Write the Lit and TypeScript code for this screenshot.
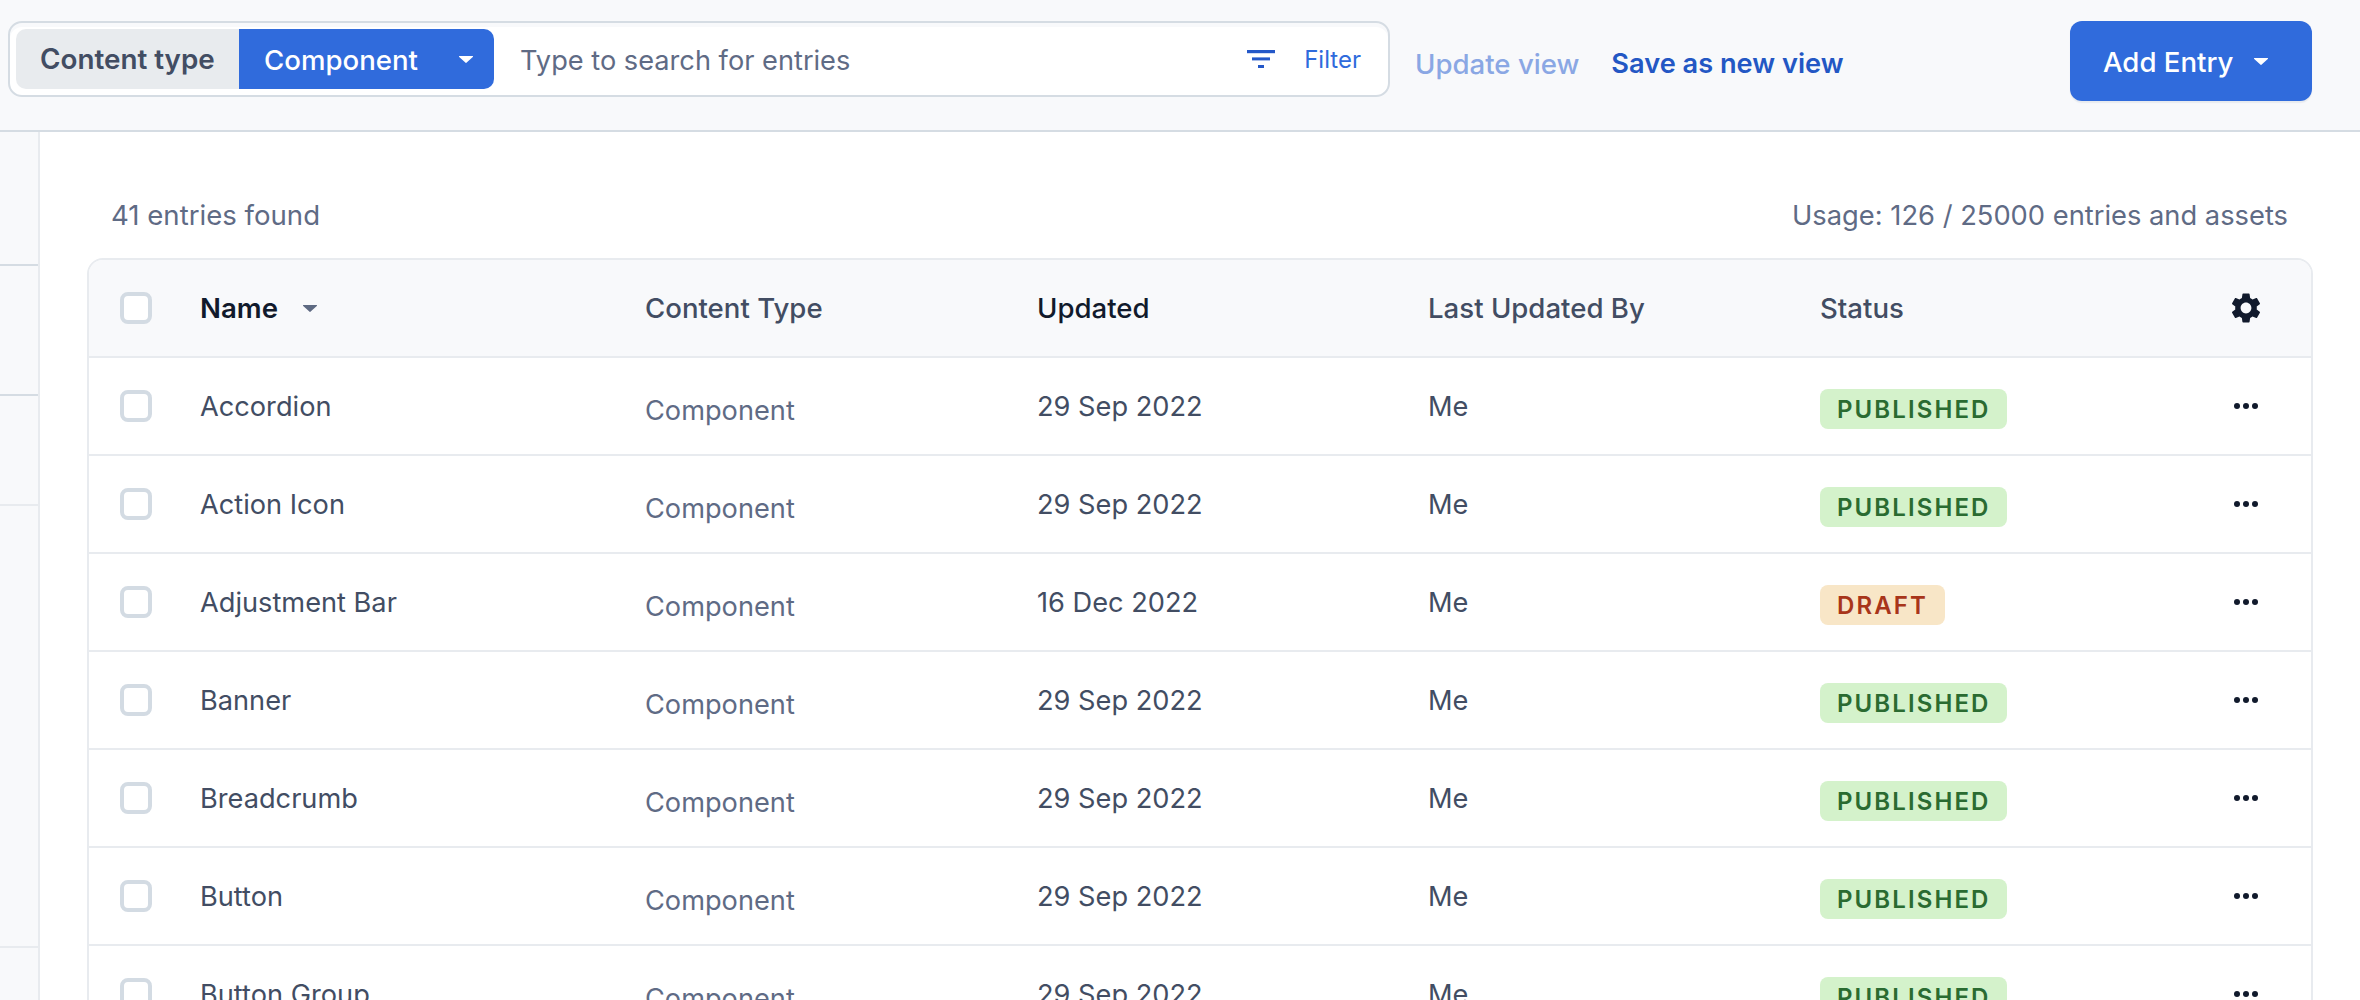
import { LitElement, html, css, svg } from "lit";
import { customElement } from "lit/decorators.js";

const rows = [
  ["Accordion", "29 Sep 2022", "PUBLISHED"],
  ["Action Icon", "29 Sep 2022", "PUBLISHED"],
  ["Adjustment Bar", "16 Dec 2022", "DRAFT"],
  ["Banner", "29 Sep 2022", "PUBLISHED"],
  ["Breadcrumb", "29 Sep 2022", "PUBLISHED"],
  ["Button", "29 Sep 2022", "PUBLISHED"],
  ["Button Group", "29 Sep 2022", "PUBLISHED"],
];

const gear = "M19.14,12.94c0.04-0.3,0.06-0.61,0.06-0.94c0-0.32-0.02-0.64-0.07-0.94l2.03-1.58c0.18-0.14,0.23-0.41,0.12-0.61l-1.92-3.32c-0.12-0.22-0.37-0.29-0.59-0.22l-2.39,0.96c-0.5-0.38-1.03-0.7-1.62-0.94L14.4,2.81c-0.04-0.24-0.24-0.41-0.48-0.41h-3.84c-0.24,0-0.43,0.17-0.47,0.41L9.25,5.35C8.66,5.59,8.12,5.92,7.63,6.29L5.24,5.33c-0.22-0.08-0.47,0-0.59,0.22L2.74,8.87C2.62,9.08,2.66,9.34,2.86,9.48l2.03,1.58C4.84,11.36,4.8,11.69,4.8,12s0.02,0.64,0.07,0.94l-2.03,1.58c-0.18,0.14-0.23,0.41-0.12,0.61l1.92,3.32c0.12,0.22,0.37,0.29,0.59,0.22l2.39-0.96c0.5,0.38,1.03,0.7,1.62,0.94l0.36,2.54c0.05,0.24,0.24,0.41,0.48,0.41h3.84c0.24,0,0.44-0.17,0.47-0.41l0.36-2.54c0.59-0.24,1.13-0.56,1.62-0.94l2.39,0.96c0.22,0.08,0.47,0,0.59-0.22l1.92-3.32c0.12-0.22,0.07-0.47-0.12-0.61L19.14,12.94z M12,15.6c-1.98,0-3.6-1.62-3.6-3.6s1.62-3.6,3.6-3.6s3.6,1.62,3.6,3.6S13.98,15.6,12,15.6z";

const caret = () => html`<svg class="caret" viewBox="0 0 14 7"><path d="M.6 0h12.8a.5.5 0 0 1 .4.9L7.4 6.8a.6.6 0 0 1-.8 0L.2.9A.5.5 0 0 1 .6 0z"/></svg>`;

@customElement("app-root")
export class AppRoot extends LitElement {
  static styles = css`
    :host { display: block; height: 1000px; overflow: hidden; background: #fff; font-family: Inter, "Liberation Sans", sans-serif; color: #424d63; font-size: 27.2px; }
    * { box-sizing: border-box; }
    .header { height: 132px; background: #f8f9fb; border-bottom: 2px solid #d5dce3; display: flex; align-items: flex-start; padding: 21px 48px 0 8px; }
    .search { width: 1382px; height: 76px; background: #fff; border: 2px solid #d5dce3; border-radius: 14px; box-shadow: inset 0 4px 0 #f8f9fb; padding: 0 27px 0 6px; display: flex; align-items: center; flex: none; }
    .ctype { height: 60px; width: 223px; background: #e8ebee; border-radius: 10px 0 0 10px; display: flex; align-items: center; padding-left: 24px; font-weight: 600; font-size: 27.8px; color: #424d63; flex: none; }
    .comp { height: 60px; width: 255px; background: #306bdc; border-radius: 0 10px 10px 0; color: #fff; font-weight: 500; font-size: 27.6px; display: flex; align-items: center; padding: 0 21px 0 25px; justify-content: space-between; flex: none; }
    .comp span { padding-top: 2px; }
    .caret { width: 14px; height: 7px; display: block; flex: none; }
    .caret path { fill: currentColor; }
    .ph { flex: 1; padding: 2px 0 0 26px; color: #5f6b85; }
    .filter { display: flex; align-items: center; gap: 29px; color: #2f6bdc; font-size: 24px; }
    .filter svg { width: 28px; height: 18px; display: block; }
    .links { display: flex; gap: 32px; padding: 26px 0 0 25px; flex: none; font-weight: 500; font-size: 27.6px; }
    .update { color: #8aa7e4; }
    .save { color: #2357c4; font-weight: 600; font-size: 27.2px; }
    .add { margin-left: auto; width: 242px; height: 80px; background: #306bdc; color: #fff; border-radius: 12px; display: flex; align-items: center; gap: 21px; padding-left: 33px; font-weight: 500; font-size: 27.6px; box-shadow: 0 2px 1px #e8ebef; }
    .add span { padding-top: 2px; }
    .body { display: flex; height: 868px; }
    .side { width: 40px; flex: none; background: #f8f9fb; border-right: 2px solid #e8ebef; display: flex; flex-direction: column; }
    .side div { border-bottom: 2px solid #e8ebef; flex: none; }
    .side .s1 { height: 134px; border-color: #d5dce3; }
    .side .s2 { height: 130px; border-color: #d5dce3; }
    .side .s3 { height: 110px; }
    .side .s4 { height: 442px; }
    .main { flex: 1; padding: 0 47px; overflow: hidden; }
    .info { height: 126px; display: flex; justify-content: space-between; align-items: flex-end; padding: 0 25px 26px 24px; color: #5f6b85; font-size: 27.6px; }
    .usage { font-size: 27.3px; }
    .table { border: 2px solid #e8ebef; border-radius: 16px 16px 0 0; }
    .row { display: grid; grid-template-columns: 111px 445px 392px 391px 392px 396px 60px; height: 98px; border-bottom: 2px solid #e8ebef; align-items: center; }
    .head { background: #f8f9fb; border-radius: 14px 14px 0 0; font-weight: 500; font-size: 27.6px; }
    .box { width: 32px; height: 32px; border: 4px solid #d3dbe3; border-radius: 8px; background: #fff; margin-left: 31px; }
    .dark { color: #111a2c; }
    .bold { font-weight: 600; display: flex; align-items: center; gap: 25px; }
    .bold .caret { color: #5e6a82; }
    .low { padding-top: 6px; }
    .muted { color: #5f6b85; padding-top: 8px; }
    .badge { display: inline-block; height: 40px; line-height: 41px; padding: 0 17px 0 17px; border-radius: 8px; font-size: 24px; font-weight: 600; letter-spacing: 2.1px; }
    .PUBLISHED { background: #d4f2cb; color: #2a6b31; }
    .DRAFT { background: #f8e6c7; color: #a8351a; }
    .act { display: flex; justify-content: center; }
    .cog { width: 36px; height: 36px; display: block; fill: #111a2c; }
    .dots { width: 24px; height: 6px; display: block; fill: #111a2c; }
  `;

  render() {
    return html`
      <div class="header">
        <div class="search">
          <div class="ctype">Content type</div>
          <div class="comp"><span>Component</span>${caret()}</div>
          <div class="ph">Type to search for entries</div>
          <div class="filter">
            <svg viewBox="0 0 28 18"><g fill="#2458c8"><rect width="28" height="3.2"/><rect x="5" y="7.4" width="18" height="3"/><rect x="11" y="15" width="6" height="3"/></g></svg>
            <span>Filter</span>
          </div>
        </div>
        <div class="links"><span class="update">Update view</span><span class="save">Save as new view</span></div>
        <div class="add"><span>Add Entry</span>${caret()}</div>
      </div>
      <div class="body">
        <div class="side"><div class="s1"></div><div class="s2"></div><div class="s3"></div><div class="s4"></div></div>
        <div class="main">
          <div class="info"><span>41 entries found</span><span class="usage">Usage: 126 / 25000 entries and assets</span></div>
          <div class="table">
            <div class="row head">
              <div class="box"></div>
              <div class="bold dark"><span>Name</span>${caret()}</div>
              <div>Content Type</div>
              <div class="dark">Updated</div>
              <div>Last Updated By</div>
              <div>Status</div>
              <div class="act"><svg class="cog" viewBox="0 0 24 24">${svg`<path d=${gear}/>`}</svg></div>
            </div>
            ${rows.map(([name, date, status]) => html`
              <div class="row">
                <div class="box"></div>
                <div>${name}</div>
                <div class="muted">Component</div>
                <div>${date}</div>
                <div>Me</div>
                <div class="low"><span class="badge ${status}">${status}</span></div>
                <div class="act"><svg class="dots" viewBox="0 0 24 6"><circle cx="3" cy="3" r="3"/><circle cx="12" cy="3" r="3"/><circle cx="21" cy="3" r="3"/></svg></div>
              </div>`)}
          </div>
        </div>
      </div>
    `;
  }
}
